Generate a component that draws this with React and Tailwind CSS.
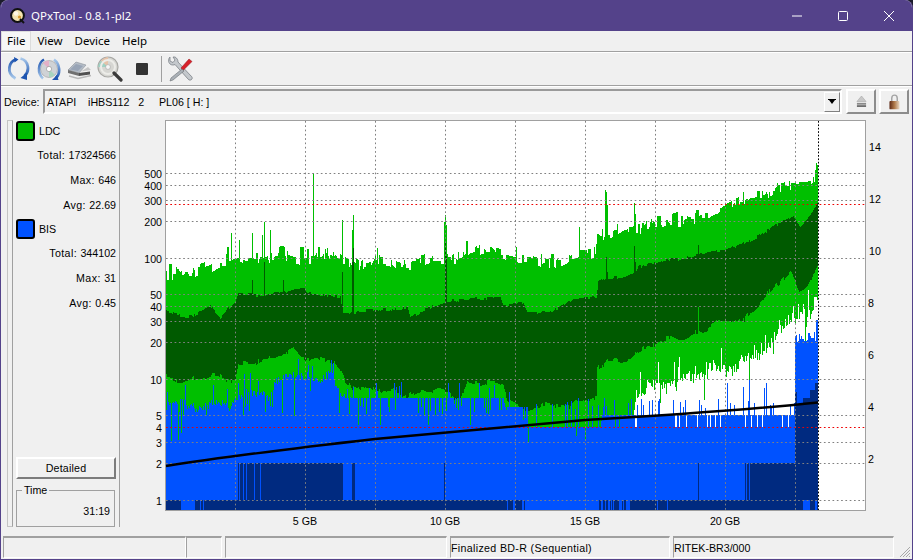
import React from 'react';

const rng = (seed) => () => {
  seed = (seed + 0x6d2b79f5) | 0;
  let t = Math.imul(seed ^ (seed >>> 15), 1 | seed);
  t = (t + Math.imul(t ^ (t >>> 7), 61 | t)) ^ t;
  return ((t ^ (t >>> 14)) >>> 0) / 4294967296;
};

const interp = (pts, x) => {
  for (let i = 1; i < pts.length; i++) {
    if (x <= pts[i][0]) {
      const [x0, y0] = pts[i - 1];
      const [x1, y1] = pts[i];
      return y0 + ((y1 - y0) * (x - x0)) / (x1 - x0 || 1);
    }
  }
  return pts[pts.length - 1][1];
};

const LT = [[166, 273], [180, 277], [193, 273], [207, 267], [233, 263], [257, 260], [273, 256], [300, 256], [327, 256], [340, 260], [360, 265], [393, 263], [427, 260], [443, 258], [470, 253], [500, 255], [520, 260], [540, 263], [570, 255], [595, 255], [597, 235], [620, 235], [640, 232], [650, 224], [680, 222], [700, 215], [730, 208], [750, 200], [790, 187], [810, 180], [818, 176]];
const DT = [[166, 312], [180, 317], [193, 315], [210, 305], [220, 317], [235, 303], [238, 295], [260, 295], [277, 292], [303, 288], [307, 295], [340, 295], [343, 312], [377, 312], [407, 307], [410, 315], [443, 303], [467, 300], [470, 297], [500, 298], [503, 307], [523, 303], [527, 313], [550, 310], [573, 300], [596, 298], [598, 282], [607, 278], [633, 273], [637, 268], [667, 260], [683, 257], [700, 253], [725, 252], [743, 243], [767, 230], [793, 217], [800, 228], [813, 210], [818, 200]];
const DB = [[166, 378], [235, 378], [238, 362], [270, 362], [293, 348], [300, 355], [317, 360], [333, 363], [342, 373], [345, 382], [377, 392], [410, 392], [443, 393], [460, 398], [467, 380], [503, 387], [507, 399], [523, 407], [570, 407], [575, 399], [596, 399], [597, 370], [607, 363], [620, 363], [635, 350], [650, 345], [677, 340], [697, 330], [725, 323], [743, 320], [750, 310], [770, 293], [790, 273], [798, 292], [807, 283], [818, 263]];
const LB = [[598, 427], [632, 420], [636, 392], [677, 382], [710, 370], [740, 366], [777, 338], [790, 315], [795, 315], [810, 318], [818, 293]];
const BT = [[166, 405], [232, 405], [236, 393], [270, 397], [275, 378], [330, 378], [340, 390], [345, 398], [503, 398], [505, 407], [527, 407], [528, 427], [600, 427], [602, 415], [794, 415], [795, 335], [818, 335]];

const LT_SPIKES = { 231: 233, 239: 240, 252: 233, 262: 235, 264: 222, 270: 230, 313: 173, 342: 220, 352: 230, 353: 215, 377: 248, 444: 222, 445: 215, 446: 225, 579: 227, 605: 190, 606: 192, 607: 205, 634: 203, 635: 214, 815: 170, 816: 163, 817: 165 };
const DT_SPIKES = { 252: 280, 264: 262, 283: 280, 342: 272, 353: 248, 352: 262, 445: 242, 446: 256, 606: 257, 607: 272, 634: 246, 635: 262, 698: 245 };

const LIGHT_GAPS = [[181, 195], [200, 201], [203, 204], [507, 508], [513, 515], [522, 524], [525, 599], [601, 603], [605, 606], [608, 610], [611, 612], [613, 614], [619, 622], [623, 624], [626, 630], [657, 658], [667, 668], [803, 810], [815, 817]];
const DARK_MID = [[238, 239], [240, 243], [244, 246], [247, 254], [255, 260], [261, 343], [352, 355], [444, 445], [698, 699], [745, 746], [747, 749], [750, 795]];
const DARK_END = [[795, 797, 392], [797, 803, 405], [803, 810, 398], [810, 815, 390], [815, 818, 383]];

const buildChart = () => {
  const r = rng(77);
  const green = [];
  const dark = [];
  const white = [];
  const blue = [];
  let a = 0;
  let b = 0;
  let c = 0;
  for (let x = 166; x < 818; x++) {
    const px = x + 0.5;
    if (r() < 0.45) {
      a = (r() - 0.5) * 11 - (r() < 0.15 ? 8 : 0);
      b = (r() - 0.5) * 3.5;
      c = (r() - 0.5) * 5;
    }
    const wobbleA = 2.5 * Math.sin(x / 8 + 1) + 2 * Math.sin(x / 21);
    const wobbleB = 1.5 * Math.sin(x / 11 + 2);
    const wobbleC = 2.5 * Math.sin(x / 9) + 1.5 * Math.sin(x / 4 + 1);
    const lt = LT_SPIKES[x] || interp(LT, x) + a + wobbleA;
    const dt = DT_SPIKES[x] || interp(DT, x) + b + wobbleB;
    let db = interp(DB, x) + c + wobbleC;
    if (x === 698) db = 307;
    green.push(`M${px} ${lt.toFixed(0)}V510`);
    dark.push(`M${px} ${dt.toFixed(0)}V${db.toFixed(0)}`);

    let bt = interp(BT, x);
    if (x < 345) {
      bt += (r() - 0.5) * 9 + 3 * Math.sin(x / 6);
      if (r() < 0.14) bt = Math.max(bt, 404 + r() * 12);
      if (r() < 0.1) bt -= 8 + r() * 14;
      if (x < 200 && r() < 0.04) bt = 430 + r() * 12;
    } else if (x < 527) {
      if (r() < 0.16) bt += 8 + r() * 9;
      if (r() < 0.12) bt -= 6 + r() * 10;
      if (r() < 0.03) bt = 425;
    } else if (x < 600) {
      const q = r();
      if (q < 0.16) bt = 398 + r() * 12;
      else if (q < 0.2) bt = 432 + r() * 12;
    } else if (x < 795) {
      const q = r();
      if (q < 0.14) bt = 398 + r() * 10;
      else if (q < 0.26) bt = 427;
      if (x > 715 && r() < 0.03) bt = 380 + r() * 10;
    } else {
      bt += (r() - 0.3) * 10;
      if (x >= 816) bt = 320;
    }

    if (x >= 598) {
      let lb = interp(LB, x) + (r() - 0.5) * 12 + 4 * Math.sin(x / 5);
      if (x > 632 && r() < 0.08) lb += 10 + r() * 25;
      if (x > 632 && r() < 0.12) lb -= 8 + r() * 12;
      if (x < 632 && r() > 0.2) lb = 430;
      if (lb < bt) white.push(`M${px} ${lb.toFixed(0)}V${bt.toFixed(0)}`);
    }
    blue.push(`M${px} ${bt.toFixed(0)}V510`);
  }
  return { green: green.join(''), dark: dark.join(''), white: white.join(''), blue: blue.join('') };
};

const data = buildChart();

const H_GRID = [173.5, 185.5, 200.5, 221.5, 258.5, 294.5, 306.5, 321.5, 342.5, 379.5, 415.5, 442.5, 463.5, 500.5];
const V_GRID = [235.5, 305.5, 375.5, 445.5, 515.5, 585.5, 655.5, 725.5, 795.5];
const LEFT_LABELS = [['500', 174], ['400', 186], ['300', 201], ['200', 222], ['100', 259], ['50', 295], ['40', 307], ['30', 322], ['20', 343], ['10', 380], ['5', 416], ['4', 428], ['3', 443], ['2', 464], ['1', 501]];
const RIGHT_LABELS = [['14', 147], ['12', 199], ['10', 251], ['8', 303], ['6', 355], ['4', 407], ['2', 459]];
const BOTTOM_LABELS = [['5 GB', 305], ['10 GB', 445], ['15 GB', 585], ['20 GB', 725]];

const Chart = () => (
  <svg viewBox="120 120 773 410" className="w-[773px] h-[410px] shrink-0 text-[10.67px]">
    <rect x="165.5" y="120.5" width="700" height="390" fill="#ffffff" stroke="#a0a0a0" />
    <g shapeRendering="crispEdges" fill="none" strokeWidth="1">
      <path d={data.green} stroke="#00bf00" />
      <path d={data.dark} stroke="#005a00" />
      <path d={data.white} stroke="#ffffff" />
      <path d={data.blue} stroke="#0052ff" />
      {DARK_MID.map(([x1, x2]) => (
        <rect key={x1} x={x1} y="463" width={x2 - x1} height="37" fill="#002a80" />
      ))}
      {DARK_END.map(([x1, x2, y]) => (
        <rect key={x1} x={x1} y={y} width={x2 - x1} height={500 - y} fill="#002a80" />
      ))}
      <rect x="166" y="500" width="652" height="10" fill="#002a80" />
      {LIGHT_GAPS.map(([x1, x2]) => (
        <rect key={x1} x={x1} y="500" width={x2 - x1} height="10" fill="#0052ff" />
      ))}
    </g>
    <g stroke="#808080" strokeDasharray="1.7 2.6">
      {H_GRID.map((y) => (
        <line key={y} x1="166" x2="865" y1={y} y2={y} />
      ))}
      {V_GRID.map((x) => (
        <line key={x} x1={x} x2={x} y1="121" y2="510" />
      ))}
    </g>
    <g stroke="#ee0000" strokeDasharray="1.7 2.6">
      <line x1="166" x2="865" y1="204.5" y2="204.5" />
      <line x1="166" x2="865" y1="427.5" y2="427.5" />
    </g>
    <line x1="818.5" x2="818.5" y1="121" y2="510" stroke="#000000" strokeDasharray="1.7 1.7" />
    <path d="M166 466C235 455 305 447 375 439C445 432 515 426 585 420C655 416 725 412 818 402.5" fill="none" stroke="#000000" strokeWidth="2.4" />
    {LEFT_LABELS.map(([t, y]) => (
      <text key={t + y} x="162" y={y + 4} textAnchor="end" fill="#000000">{t}</text>
    ))}
    {RIGHT_LABELS.map(([t, y]) => (
      <text key={t} x={t.length > 1 ? 869 : 868} y={y + 4} fill="#000000">{t}</text>
    ))}
    {BOTTOM_LABELS.map(([t, x]) => (
      <text key={t} x={x} y="525" textAnchor="middle" fill="#000000">{t}</text>
    ))}
  </svg>
);

const ArcDefs = ({ prefix }) => (
  <defs>
    <linearGradient id={`${prefix}L`} x1="0" y1="0" x2="0" y2="1">
      <stop offset="0" stopColor="#1f55b0" />
      <stop offset="1" stopColor="#a8c8ea" />
    </linearGradient>
    <linearGradient id={`${prefix}R`} x1="0" y1="0" x2="0" y2="1">
      <stop offset="0" stopColor="#a8c8ea" />
      <stop offset="1" stopColor="#1f55b0" />
    </linearGradient>
  </defs>
);

const RefreshIcon = () => (
  <svg viewBox="0 0 24 24" className="w-6 h-6">
    <ArcDefs prefix="arcA" />
    <path d="M10.5 2.5C3 4 -0.5 16 9.5 21.5" fill="none" stroke="url(#arcAL)" strokeWidth="2.8" />
    <path d="M14.5 1.5C23 3.5 24 14 18.5 19" fill="none" stroke="url(#arcAR)" strokeWidth="2.8" />
    <path d="M8 0L12.5 2.5L8.5 5.5ZM14.5 21L21 15.5L21 23Z" fill="#1f55b0" />
  </svg>
);

const DiscRefreshIcon = () => (
  <svg viewBox="0 0 24 24" className="w-6 h-6">
    <ArcDefs prefix="arcB" />
    <circle cx="12" cy="12" r="8.5" fill="#cfd2d6" stroke="#9a9a9a" strokeWidth="0.6" />
    <path d="M12 12L6 6A8.5 8.5 0 0 1 12 3.5Z" fill="#e3b0c8" />
    <path d="M12 12L18 18A8.5 8.5 0 0 1 12 20.5Z" fill="#a8d4c0" />
    <circle cx="12" cy="12" r="2.6" fill="#ffffff" stroke="#8a8a8a" strokeWidth="0.6" />
    <path d="M7 2.5C1 6 0 16 6 21.5" fill="none" stroke="url(#arcBL)" strokeWidth="2.6" />
    <path d="M17 2.5C23 7 24 16 19 21" fill="none" stroke="url(#arcBR)" strokeWidth="2.6" />
    <path d="M15 23L20 18L21.5 23Z" fill="#1f55b0" />
  </svg>
);

const DriveIcon = () => (
  <svg viewBox="0 0 26 24" className="w-[26px] h-6">
    <path d="M2 13L10 5L20 8L13 16Z" fill="#b4bcc6" stroke="#8c929a" strokeWidth="0.6" />
    <path d="M4 12.5L10 7L17 9L12 14Z" fill="#98a4b6" />
    <path d="M2 13L13 16V19L2 16Z" fill="#707070" />
    <path d="M13 16L24 14.5V17.5L13 19Z" fill="#505050" />
    <path d="M15 14.5L22 10L25 13" fill="#c6c6c6" />
    <path d="M3 19L12 21.5L25 18.5" fill="none" stroke="#b8b8b8" strokeWidth="1.4" />
  </svg>
);

const MagnifierIcon = () => (
  <svg viewBox="0 0 26 26" className="w-[26px] h-[26px]">
    <circle cx="11" cy="11" r="10" fill="#d6d6d2" stroke="#a8a8a4" strokeWidth="1.2" />
    <path d="M11 11L4 5A10 10 0 0 1 11 1Z" fill="#e6c2a8" />
    <path d="M11 11L4 5A10 10 0 0 0 1 11Z" fill="#9fd0c2" />
    <circle cx="11" cy="11" r="7" fill="none" stroke="#ecece8" strokeWidth="2" />
    <circle cx="11" cy="11" r="2.4" fill="#f6f6f6" stroke="#9a9a9a" strokeWidth="0.5" />
    <path d="M17 17L24 24" stroke="#3a3a3a" strokeWidth="3.2" strokeLinecap="round" />
  </svg>
);

const ToolsIcon = () => (
  <svg viewBox="0 0 26 26" className="w-[26px] h-[26px]">
    <path d="M3 1C1 3 1 6 3 8C5 9.5 7 9 8 8.5L21 23C22 24.5 24 24.5 25 23C25.6 22 25 20.5 24 20L11 6C11 4 10 2 8 1L6 1L8 4L6 6.5L3 5Z" fill="#c4c8cc" stroke="#70767c" strokeWidth="0.7" />
    <path d="M14 12L22 3L25 5.5L16 14.5Z" fill="#d8202a" stroke="#8e1118" strokeWidth="0.5" />
    <path d="M15 13L4 22L3 25L6 24L17 15Z" fill="#aab0b6" stroke="#6a7076" strokeWidth="0.6" />
  </svg>
);

const EjectIcon = () => (
  <svg viewBox="0 0 12 14" className="w-[11px] h-[13px]">
    <path d="M6 1L11 7H1Z" fill="#c8c8c8" stroke="#a4a4a4" strokeWidth="0.6" />
    <rect x="1" y="8.5" width="10" height="2" fill="#8a8a8a" />
    <rect x="1" y="11" width="10" height="2" fill="#6e6e6e" />
  </svg>
);

const LockIcon = () => (
  <svg viewBox="0 0 12 17" className="w-[11px] h-[16px]">
    <defs>
      <linearGradient id="lockBody" x1="0" y1="0" x2="1" y2="0">
        <stop offset="0" stopColor="#5e2a16" />
        <stop offset="0.5" stopColor="#b07a4a" />
        <stop offset="1" stopColor="#e8d8c4" />
      </linearGradient>
    </defs>
    <path d="M3 8V4.5C3 2.5 4.2 1 6 1C7.8 1 9 2.5 9 4.5V8" fill="none" stroke="#a4a4a4" strokeWidth="1.6" />
    <rect x="0.5" y="7.5" width="11" height="9" rx="1" fill="url(#lockBody)" />
  </svg>
);

const QpxLogo = () => (
  <svg viewBox="0 0 16 16" className="w-4 h-4">
    <circle cx="7.5" cy="7.5" r="6.4" fill="#f4e4b0" stroke="#111111" strokeWidth="2" />
    <circle cx="6" cy="5.5" r="2.2" fill="#fff8e8" />
    <circle cx="9.5" cy="9" r="1.6" fill="#d89a30" />
    <path d="M10 11L14 15" stroke="#111111" strokeWidth="2" />
  </svg>
);

const StatRow = ({ label, value }) => (
  <div className="h-[25px] flex items-center justify-end pr-[3px] whitespace-pre">
    <span className="tracking-[0.4px]">{label}: </span>
    <span>{value}</span>
  </div>
);

const Swatch = ({ color, label }) => (
  <div className="flex items-center h-[19px] ml-[3px] gap-[4px]">
    <div className={`w-[19px] h-[20px] rounded-[3px] border-2 border-black ${color}`} />
    <span>{label}</span>
  </div>
);

const StatusCell = ({ width, children }) => (
  <div className={`${width} h-[22px] shrink-0 flex items-center border border-t-2 border-[#a0a0a0] border-r-white border-b-white whitespace-pre`}>{children}</div>
);

export default function App() {
  return (
    <div className="w-[913px] h-[560px] bg-[#1c1c2c] overflow-hidden font-['Liberation_Sans',sans-serif] text-[10.67px] text-black">
      <div className="h-full rounded-t-[8px] overflow-hidden bg-[#f0f0f0] border border-t-0 border-[#54428a] flex flex-col">
        <div className="h-[31px] shrink-0 bg-[#54428a] flex items-center text-white pl-[9px] font-['Noto_Sans',sans-serif] text-[11.5px]">
          <QpxLogo />
          <span className="ml-[5px]">QPxTool - 0.8.1-pl2</span>
          <div className="ml-auto flex">
            <div className="w-[46px] h-[31px] flex items-center justify-center">
              <svg viewBox="0 0 10 10" className="w-[10px] h-[10px]"><path d="M0 5H10" stroke="#ffffff" /></svg>
            </div>
            <div className="w-[46px] h-[31px] flex items-center justify-center">
              <svg viewBox="0 0 10 10" className="w-[10px] h-[10px]"><rect x="0.5" y="0.5" width="9" height="9" rx="1" fill="none" stroke="#ffffff" /></svg>
            </div>
            <div className="w-[46px] h-[31px] flex items-center justify-center">
              <svg viewBox="0 0 10 10" className="w-[10px] h-[10px]"><path d="M0 0L10 10M10 0L0 10" stroke="#ffffff" /></svg>
            </div>
          </div>
        </div>

        <div className="h-[21px] shrink-0 flex items-stretch border-b border-[#a0a0a0] font-['Noto_Sans',sans-serif] text-[11.5px]">
          <span className="px-[5px] flex items-center bg-[#f6f6f6] border border-[#dcdcdc]">File</span>
          <span className="px-[6px] flex items-center">View</span>
          <span className="px-[6px] flex items-center">Device</span>
          <span className="px-[6px] flex items-center">Help</span>
        </div>

        <div className="h-[34px] shrink-0 flex items-center pl-[5px] border-t border-t-white border-b border-b-[#a0a0a0]">
          <RefreshIcon />
          <div className="ml-[7px]"><DiscRefreshIcon /></div>
          <div className="ml-[5px]"><DriveIcon /></div>
          <div className="ml-[5px]"><MagnifierIcon /></div>
          <div className="ml-[13px] w-[12px] h-[12px] bg-[#333333] rounded-[1px]" />
          <div className="ml-[13px] w-px h-[26px] bg-[#a0a0a0]" />
          <div className="ml-[5px]"><ToolsIcon /></div>
        </div>

        <div className="h-[30px] shrink-0 flex items-center pl-[3px] pr-[3px] border-t border-white">
          <span className="w-[39px] shrink-0">Device:</span>
          <div className="flex-1 h-[25px] flex items-center pl-[2px] border-2 border-[#9a9a9a] border-r-white border-b-white whitespace-pre">
            <span>ATAPI    iHBS112   2     PL06 [ H: ]</span>
            <div className="ml-auto w-[16px] h-[20px] flex items-center justify-center border border-white border-r-[#808080] border-b-[#808080]">
              <svg viewBox="0 0 8 6" className="w-[8px] h-[6px]"><path d="M0 0H8V1H7L4 5L1 1H0Z" fill="#000000" /></svg>
            </div>
          </div>
          <div className="ml-[4px] w-[30px] h-[25px] flex items-center justify-center border-2 border-white border-r-[#8c8c8c] border-b-[#8c8c8c]"><EjectIcon /></div>
          <div className="ml-[3px] w-[30px] h-[25px] flex items-center justify-center border-2 border-white border-r-[#8c8c8c] border-b-[#8c8c8c]"><LockIcon /></div>
        </div>

        <div className="flex-1 min-h-0 flex pl-[6px] pt-[4px]">
          <div className="w-[6px] h-[407px] shrink-0 border border-r-[#a0a0a0] border-[#c4c4c4]" />
          <div className="w-[107px] h-[407px] shrink-0 border-r border-[#a0a0a0] flex flex-col pt-[1px]">
            <Swatch color="bg-[#00bb00]" label="LDC" />
            <div className="h-[2px]" />
            <StatRow label="Total" value="17324566" />
            <StatRow label="Max" value="646" />
            <StatRow label="Avg" value="22.69" />
            <div className="h-[2px]" />
            <Swatch color="bg-[#0052ff]" label="BIS" />
            <div className="h-[2px]" />
            <StatRow label="Total" value="344102" />
            <StatRow label="Max" value="31" />
            <StatRow label="Avg" value="0.45" />
            <button className="mt-auto ml-[3px] w-[100px] h-[22px] border-2 border-white border-r-[#7c7c7c] border-b-[#7c7c7c] flex items-center justify-center tracking-[0.2px]">Detailed</button>
            <fieldset className="mt-[3px] ml-[3px] w-[99px] h-[45px] border border-[#a0a0a0] flex flex-col">
              <legend className="ml-[5px] px-[2px]">Time</legend>
              <div className="flex-1 flex items-center justify-end pr-[4px] pt-[5px]">31:19</div>
            </fieldset>
          </div>
          <Chart />
        </div>

        <div className="h-[25px] shrink-0 flex pl-[2px] pt-[2px] gap-[3px]">
          <div className="flex">
            <StatusCell width="w-[183px]" />
            <StatusCell width="w-[36px]" />
          </div>
          <StatusCell width="w-[222px]" />
          <StatusCell width="w-[220px]"><span className="tracking-[0.33px]">Finalized BD-R (Sequential)</span></StatusCell>
          <StatusCell width="w-[221px]"><span>RITEK-BR3/000</span></StatusCell>
          <div className="ml-auto self-end mr-[1px] mb-[1px]">
            <svg viewBox="0 0 12 12" className="w-[12px] h-[12px]"><path d="M11 1L1 11M11 4L4 11M11 7L7 11M11 10L10 11" stroke="#a8a8a8" /></svg>
          </div>
        </div>
      </div>
    </div>
  );
}
